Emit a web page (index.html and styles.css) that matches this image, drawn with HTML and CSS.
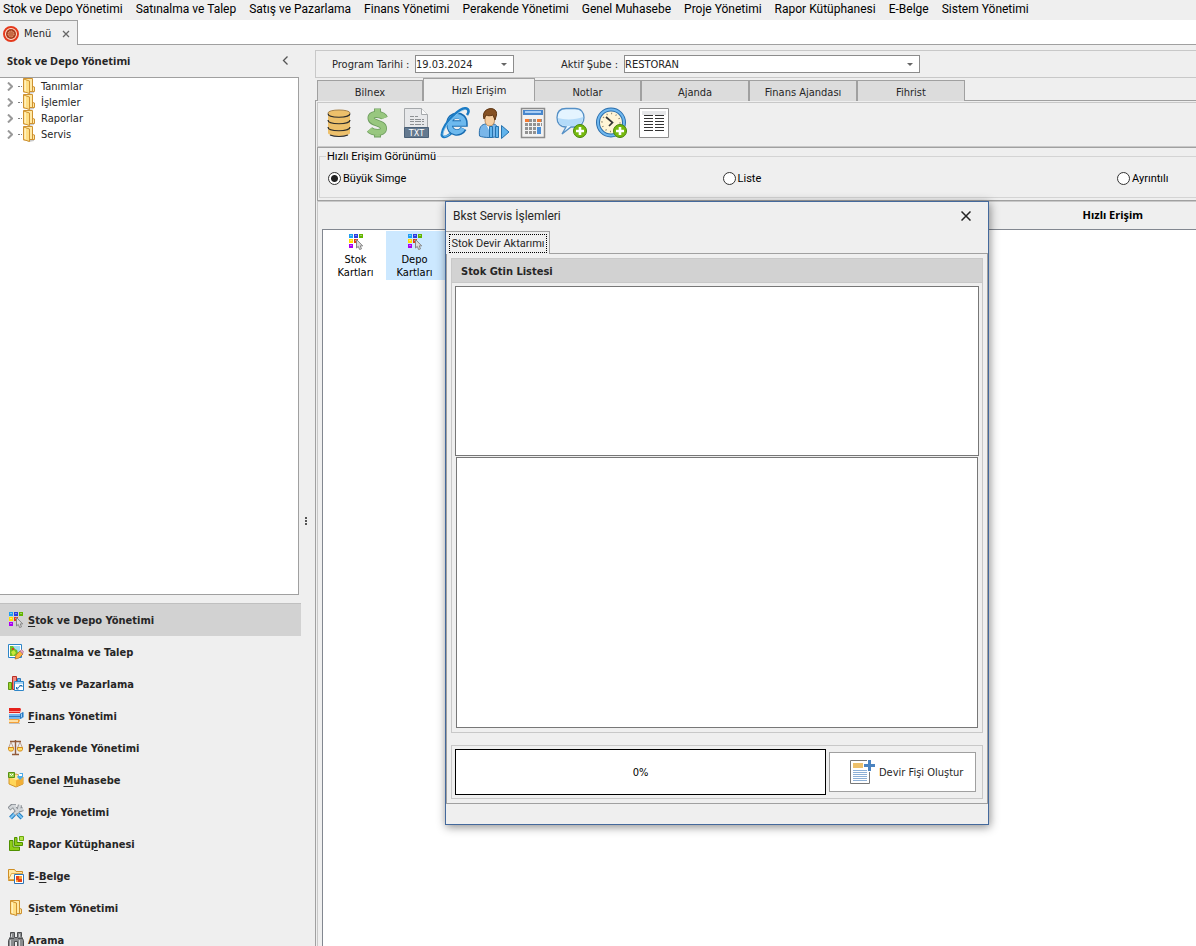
FILE: index.html
```html
<!DOCTYPE html>
<html lang="tr">
<head>
<meta charset="utf-8">
<title>Menü</title>
<link rel="stylesheet" href="styles.css">
</head>
<body>
<svg class="sprite" aria-hidden="true">
  <symbol id="i-blocks" viewBox="0 0 16 16">
    <path fill="#1e9ff2" d="M1 0h4v4H1z"/><path fill="#2b3fe0" d="M6 0h4v4H6z"/><path fill="#62b500" d="M11 0h4v4h-4z"/>
    <path fill="#ffe000" d="M1 5h4v4H1z"/><path fill="#e03a1e" d="M6 5h4v4H6z"/><path fill="#a800f0" d="M1 10h4v4H1z"/>
    <path fill="#fff" opacity=".4" d="M2 1h2v1H2zM7 1h2v1H7zM12 1h2v1h-2zM2 6h2v1H2zM7 6h2v1H7zM2 11h2v1H2z"/>
    <path fill="#dcdcdc" stroke="#858585" d="M8.500 5.500v8.500l1.800-1.600 1.300 3.100 1.900-.7-1.300-2.900h2.500z"/>
  </symbol>
  <symbol id="i-folder" viewBox="0 0 16 16">
    <path fill="#c9c9c9" d="M4 14h9v1l-5 1z"/>
    <path fill="#ffe9a6" stroke="#cf9230" d="M2.500.500h9v8l2 .500v4.500H9l-6.500.500z"/>
    <path fill="#ffdf85" stroke="#cf9230" d="M2.500 1l6 2v12.500l-6-2z"/><path fill="#fff0bd" d="M3.500 2l1.500.600v10.900l-1.500-.500z"/>
    <path fill="none" stroke="#cf9230" d="M11.500 8v5.500"/>
  </symbol>
  <symbol id="i-map" viewBox="0 0 16 16">
    <path fill="#fff" stroke="#2e86c8" d="M.5.500h13v13H.5z"/><path fill="#9edcf5" d="M2 2h10v10H2z"/>
    <path fill="#6fbd28" d="M2 2h3l2 3 2 1 1 3-3 3H2z"/><path fill="#c9e83b" d="M3 8l3-2 2 3-3 3z"/><path fill="#d93b20" d="M4 4h2v2H4z"/>
    <path fill="#ffb440" stroke="#a8641c" stroke-width=".7" d="M7 15l1-4 4-4 3 3-4 4z"/><path fill="#e9a5c0" stroke="#a86a84" stroke-width=".6" d="M12 7l1.500-1.500 2 2L14.500 10z"/>
  </symbol>
  <symbol id="i-bars" viewBox="0 0 16 16">
    <path fill="#9bd22e" stroke="#5f9410" d="M.5 6.500h3v7h-3z"/><path fill="#f08a80" stroke="#bb2f25" d="M4.500.500h4v13h-4z"/>
    <path fill="#68b5ee" stroke="#2c78b8" d="M9.500 2.500h3v4h-3z"/><path fill="#fff" stroke="#2e86c8" d="M6.500 5.500h9v9h-9z"/><path fill="#a9d6f4" d="M7 6h8v2H7z"/>
    <path fill="none" stroke="#1d6fb0" d="M9 12.500l4-3M8.500 11v2h2M11.500 9.500H14V11"/>
  </symbol>
  <symbol id="i-books" viewBox="0 0 16 16">
    <path fill="#e5201b" d="M1 0h11l1 1-1 4H1z"/><path fill="#ff9188" d="M1 3h11v1H1z"/>
    <path fill="#77b6ea" d="M1 6h10l5-2v5l-3 2H1z"/><path fill="#2e78bf" d="M1 8h11v1H1zM12 6l3-2v5l-3 2z"/><path fill="#9fd0f5" d="M13 6l1-.600v3.600l-1 .600z"/>
    <path fill="#f3a13a" d="M1 11h10l1 1-1 3H1z"/><path fill="#ffe0a5" d="M1 12h9v2H1z"/><path fill="#c2c2c2" d="M1 15h11v1H1z"/>
  </symbol>
  <symbol id="i-scale" viewBox="0 0 16 16">
    <path fill="none" stroke="#925b3a" stroke-width="1.400" d="M2 1.500h11M7.500 0v14M4 14.500h7"/><path fill="none" stroke="#b08c74" stroke-width=".8" d="M3 2L.5 8M3 2l2.500 6M12 2L9.500 8M12 2l2.500 6"/>
    <path fill="#ffe069" stroke="#d58c1c" d="M.5 7.500h5v2l-1 1.500h-3l-1-1.500zM9.500 7.500h5v2l-1 1.500h-3l-1-1.500z"/>
  </symbol>
  <symbol id="i-box" viewBox="0 0 16 16">
    <path fill="#ffd659" stroke="#d2952a" d="M1 5l7-3 7 3v7l-7 3-7-3z"/><path fill="#ffeaa0" d="M1.500 5L8 8l6.500-3L8 2.500z"/><path fill="#f2ae35" d="M8 8.500L14.500 6v6L8 14.500z"/>
    <path fill="#9bd052" stroke="#569010" d="M.5.500h6v5h-6z"/><path fill="none" stroke="#fff" d="M2 2l1.500 1.500L5 2"/>
    <path fill="#4bacea" d="M9 5l3-4h3v4l-3 3z"/><path fill="#fff" d="M11 2h3v2h-3z"/>
  </symbol>
  <symbol id="i-tools" viewBox="0 0 16 16">
    <path fill="none" stroke="#247fc0" stroke-width="4" d="M10 10l4 4M6.500 10L2.500 14"/><path fill="none" stroke="#7bc4f3" stroke-width="2" d="M10 10l4 4M6.500 10L2.500 14"/>
    <path fill="none" stroke="#858a90" stroke-width="4.200" d="M1 5l3-3h4M6 3l4.500 5.500M15 5l-3 1-1-1 1-4M11 5.500L6.500 10"/><path fill="none" stroke="#d3d7da" stroke-width="2.400" d="M1.500 4.500l3-2.500H8M6 3l4.500 5.500M15 5l-3 1-1-1 1-4M11 5.500L6.500 10"/>
  </symbol>
  <symbol id="i-green" viewBox="0 0 16 16">
    <path fill="#8fce17" stroke="#4f9000" d="M1.500 4.500H5v6.500h6.500v3.500h-10zM6.500 1.500H9v5h5.500v3h-8z"/><path fill="#b4e34c" stroke="#69a80c" d="M11.500.500h4v4h-4z"/>
  </symbol>
  <symbol id="i-ebelge" viewBox="0 0 16 16">
    <path fill="#ffe8a3" stroke="#cf8e24" d="M.5 1.500h6l1.500 2h6.500v9H.5z"/><path fill="#fff4cc" stroke="#dda84c" d="M3.500 5.500h11v6h-14z"/>
    <path fill="#fff" stroke="#2e74b5" d="M6.500 6.500h9v9h-9z"/><path fill="#e2451b" d="M8 8h6v6H8z"/><path fill="#ffa13c" d="M11 8h3v3h-3zM8 12h2v2H8z"/>
  </symbol>
  <symbol id="i-bino" viewBox="0 0 16 16">
    <path fill="#8a8c8e" stroke="#4d4f51" d="M2.500.500h4v5h3v-5h4v4l2 4v7h-6v-6h-3v6h-6v-7l2-4z"/><path fill="#d2d4d6" d="M3 2h1v3H3zM11 2h1v3h-1zM2 8h1v6H2zM11 8h1v6h-1z"/><path stroke="#4d4f51" d="M1 6.500h5M10 6.500h5"/>
  </symbol>
</svg>

<nav class="menubar">
  <a href="#">Stok ve Depo Yönetimi</a><a href="#">Satınalma ve Talep</a><a href="#">Satış ve Pazarlama</a><a href="#">Finans Yönetimi</a><a href="#">Perakende Yönetimi</a><a href="#">Genel Muhasebe</a><a href="#">Proje Yönetimi</a><a href="#">Rapor Kütüphanesi</a><a href="#">E-Belge</a><a href="#">Sistem Yönetimi</a>
</nav>

<div class="doctabs">
  <div class="doctab">
    <svg width="16" height="16" viewBox="0 0 16 16"><circle cx="8" cy="8" r="7" fill="#ffe3d0" stroke="#e5391c" stroke-width="2"/><circle cx="8" cy="8" r="5" fill="#a83a1c"/><circle cx="8" cy="8" r="3" fill="#c76a45" stroke="#efb08c" stroke-dasharray="1 1"/></svg>
    <span>Menü</span>
    <button class="plain" aria-label="Kapat"><svg width="8" height="8" viewBox="0 0 8 8"><path d="M1 1l6 6M7 1L1 7" stroke="#666" stroke-width="1.300"/></svg></button>
  </div>
</div>

<div class="workspace">
  <aside class="side">
    <header class="side-head"><h2>Stok ve Depo Yönetimi</h2>
      <button class="plain" aria-label="Daralt"><svg width="7" height="9" viewBox="0 0 7 9"><path d="M5.500.500l-4 4 4 4" fill="none" stroke="#555" stroke-width="1.300"/></svg></button>
    </header>
    <ul class="tree">
      <li><svg class="chev" viewBox="0 0 6 9"><path d="M1 .500l4 4-4 4"/></svg><i></i><svg class="ic"><use href="#i-folder"/></svg><span>Tanımlar</span></li>
      <li><svg class="chev" viewBox="0 0 6 9"><path d="M1 .500l4 4-4 4"/></svg><i></i><svg class="ic"><use href="#i-folder"/></svg><span>İşlemler</span></li>
      <li><svg class="chev" viewBox="0 0 6 9"><path d="M1 .500l4 4-4 4"/></svg><i></i><svg class="ic"><use href="#i-folder"/></svg><span>Raporlar</span></li>
      <li><svg class="chev" viewBox="0 0 6 9"><path d="M1 .500l4 4-4 4"/></svg><i></i><svg class="ic"><use href="#i-folder"/></svg><span>Servis</span></li>
    </ul>
    <nav class="groups">
      <a href="#" class="current"><svg class="ic"><use href="#i-blocks"/></svg><span><u>S</u>tok ve Depo Yönetimi</span></a>
      <a href="#"><svg class="ic"><use href="#i-map"/></svg><span>S<u>a</u>tınalma ve Talep</span></a>
      <a href="#"><svg class="ic"><use href="#i-bars"/></svg><span>Sa<u>t</u>ış ve Pazarlama</span></a>
      <a href="#"><svg class="ic"><use href="#i-books"/></svg><span><u>F</u>inans Yönetimi</span></a>
      <a href="#"><svg class="ic"><use href="#i-scale"/></svg><span>P<u>e</u>rakende Yönetimi</span></a>
      <a href="#"><svg class="ic"><use href="#i-box"/></svg><span>Genel <u>M</u>uhasebe</span></a>
      <a href="#"><svg class="ic"><use href="#i-tools"/></svg><span>Pro<u>j</u>e Yönetimi</span></a>
      <a href="#"><svg class="ic"><use href="#i-green"/></svg><span>Rapor Kütü<u>p</u>hanesi</span></a>
      <a href="#"><svg class="ic"><use href="#i-ebelge"/></svg><span>E-<u>B</u>elge</span></a>
      <a href="#"><svg class="ic"><use href="#i-folder"/></svg><span>S<u>i</u>stem Yönetimi</span></a>
      <a href="#"><svg class="ic"><use href="#i-bino"/></svg><span>Arama</span></a>
    </nav>
  </aside>

  <div class="splitter"><svg width="2" height="8" viewBox="0 0 2 8"><path fill="#555" d="M0 0h2v2H0zM0 3h2v2H0zM0 6h2v2H0z"/></svg></div>

  <main class="main">
    <div class="filters">
      <label for="date">Program Tarihi :</label>
      <span class="combo date"><select id="date"><option>19.03.2024</option></select><svg width="6" height="3" viewBox="0 0 6 3"><path fill="#666" d="M0 0h6L3 3z"/></svg></span>
      <label for="branch">Aktif Şube :</label>
      <span class="combo branch"><select id="branch"><option>RESTORAN</option></select><svg width="6" height="3" viewBox="0 0 6 3"><path fill="#666" d="M0 0h6L3 3z"/></svg></span>
    </div>

    <div class="tabs" role="tablist">
      <button role="tab">Bilnex</button><button role="tab" class="active" aria-selected="true">Hızlı Erişim</button><button role="tab">Notlar</button><button role="tab">Ajanda</button><button role="tab">Finans Ajandası</button><button role="tab">Fihrist</button>
    </div>

    <div class="page">
      <div class="toolbar">
        <button class="plain" aria-label="Veritabanı"><svg width="32" height="32" viewBox="0 0 32 32"><path fill="#edc06b" d="M6 6c0-4 22-4 22 0v20c0 4-22 4-22 0z"/><path fill="none" stroke="#2b2b2b" stroke-width="1.200" d="M6 6.500c0 5 22 5 22 0M6 13c0 5 22 5 22 0M6 20c0 5 22 5 22 0M8 28c5 2 13 2 18 0"/><path fill="none" stroke="#a8834a" d="M6 6c0-4 22-4 22 0"/></svg></button>
        <button class="plain" aria-label="Döviz"><svg width="32" height="32" viewBox="0 0 32 32"><path fill="none" stroke="#6d9c5e" stroke-width="7" d="M23.500 11C22 7 10 5.500 10 11c0 6 12.500 4 12.500 10.500 0 5.500-11 4.500-14 1M16.500 1.500v6M16.500 24.500v6"/><path fill="none" stroke="#98c77f" stroke-width="5.400" d="M23.500 11C22 7 10 5.500 10 11c0 6 12.500 4 12.500 10.500 0 5.500-11 4.500-14 1M16.500 2v6M16.500 24.500v5"/></svg></button>
        <button class="plain" aria-label="Metin dosyası"><svg width="32" height="32" viewBox="0 0 32 32"><path fill="#e7e8ea" stroke="#a5a8ab" d="M4.500 1.500h17l6 6v22h-23z"/><path fill="#fafafa" stroke="#a5a8ab" d="M21.500 1.500v6h6"/><path stroke="#8d9093" stroke-dasharray="4 1 6 1" d="M10 9.500h8M10 12.500h14M10 14.500h14M10 17.500h14"/><path fill="#64798f" stroke="#4a6077" d="M4.500 20.500h24v10h-24z"/><text x="16.500" y="29" text-anchor="middle" class="txt">TXT</text></svg></button>
        <button class="plain" aria-label="Tarayıcı"><svg width="32" height="32" viewBox="0 0 32 32"><g fill="none"><path stroke="#176bb0" stroke-width="6.500" d="M24.500 21.500c-3 6-14 6-14-5 0-10 15-11 15 0H12"/><path stroke="#6db9ee" stroke-width="4.500" d="M24 21.500c-3 5.500-13.500 5.500-13.500-5C10.500 7 25 6.500 25 16.500H11"/><path stroke="#1c7cc5" stroke-width="2.600" d="M12 26.500c-6 5-10 4-9 0C5 15 23-2 28.500 2c1.500 1.500 1 4-.5 6"/><path stroke="#8fd0f8" stroke-width=".8" d="M11 27c-4 3-7 3-7 0 1-9 14-22 21-24"/></g></svg></button>
        <button class="plain" aria-label="Kullanıcı"><svg width="32" height="32" viewBox="0 0 32 32"><path fill="#79b6e9" stroke="#2b70ac" d="M1.500 29c-1-9 2-12 7-12h6c5 0 6 4 6 12-4 2-15 2-19 0z"/><path fill="#fff" d="M8 17h7l-3.500 7z"/><path fill="#f6cfa2" stroke="#9a6637" stroke-width=".7" d="M7 7h9.500v6c0 5-3 6-5 6s-4.500-2-4.500-6z"/><path fill="#855123" stroke="#5d3411" d="M6 12C2 0 20-2 18.500 8l-1.500 5-2-5c-3 1-5 1-7 0z"/><path fill="#62b4ec" stroke="#2672ad" d="M11.500 19.500h3v11h-3zM17.500 19.500h3v11h-3zM23.500 18.500l7.500 6.500-7.500 6.500z"/></svg></button>
        <button class="plain" aria-label="Hesap makinesi"><svg width="32" height="32" viewBox="0 0 32 32"><path fill="#f2f2f2" stroke="#8c8c8c" stroke-width="1.500" d="M4.500 1.500h23v29h-23z"/><path fill="#4887cd" d="M6 3h20v5H6z"/><path fill="#a9cdf3" d="M8 4h16v2H8z"/><path stroke="#929292" stroke-width="3" stroke-dasharray="3 1" d="M8 13.500h17M8 17.500h17M8 21.500h11M8 25.500h11"/><path fill="#f47b32" d="M8 12h4v3H8zM20 12h4v3h-4z"/><path fill="#4a90d9" d="M20 20h4v7h-4z"/></svg></button>
        <button class="plain" aria-label="Mesaj ekle"><svg width="32" height="32" viewBox="0 0 32 32"><path fill="#e4f4ff" stroke="#5590c6" stroke-width="1.300" d="M10 1.500h9c6 0 9 4 9 9s-3 9.500-9 9.500h-4l-9 7 4-7c-6 0-9-4-9-9.500s3-9 9-9z"/><path fill="#9fd0f7" opacity=".7" d="M2 11c6 2 18 2 25-1 0 5-3 9-8 9h-9c-5 0-8-3-8-8z"/><circle cx="24" cy="24" r="6.500" fill="#76b90d" stroke="#47850a"/><path stroke="#fff" stroke-width="2.600" d="M24 20v8M20 24h8"/></svg></button>
        <button class="plain" aria-label="Saat ekle"><svg width="32" height="32" viewBox="0 0 32 32"><circle cx="16" cy="15.500" r="13" fill="#fff5d6" stroke="#2b6eac" stroke-width="4"/><circle cx="16" cy="15.500" r="13" fill="none" stroke="#70b8ef" stroke-width="2"/><circle cx="16" cy="15.500" r="9" fill="none" stroke="#8a816a" stroke-width="1.500" stroke-dasharray="1 3.700"/><path fill="none" stroke="#333" stroke-width="1.700" d="M11 10l6.500 5.500L14 19"/><circle cx="25" cy="24" r="6.500" fill="#76b90d" stroke="#47850a"/><path stroke="#fff" stroke-width="2.600" d="M25 20v8M21 24h8"/></svg></button>
        <button class="plain last" aria-label="Liste"><svg width="32" height="32" viewBox="0 0 32 32"><path fill="#fff" stroke="#8e8e8e" d="M1.500 1.500h29v29h-29z"/><path fill="#e6e7e9" d="M4 4h24v4H4z"/><path stroke="#333" d="M6 8.500h9M17 8.500h9M6 11.500h9M17 11.500h9M6 14.500h9M17 14.500h9M6 17.500h9M17 17.500h9M6 20.500h9M17 20.500h9M6 23.500h9M17 23.500h9"/></svg></button>
      </div>

      <div class="viewbox">
        <fieldset>
          <legend>Hızlı Erişim Görünümü</legend>
          <label><input type="radio" name="view" checked>Büyük Simge</label>
          <label><input type="radio" name="view">Liste</label>
          <label><input type="radio" name="view">Ayrıntılı</label>
        </fieldset>
      </div>

      <section class="quick">
        <h2>Hızlı Erişim</h2>
        <div class="tiles">
          <button class="plain tile"><svg class="ic"><use href="#i-blocks"/></svg><span>Stok Kartları</span></button>
          <button class="plain tile selected"><svg class="ic"><use href="#i-blocks"/></svg><span>Depo Kartları</span></button>
        </div>
      </section>
    </div>
  </main>
</div>

<div class="dialog" role="dialog" aria-labelledby="dlg-title">
  <header class="dlg-head"><h1 id="dlg-title">Bkst Servis İşlemleri</h1>
    <button class="plain" aria-label="Kapat"><svg width="10" height="10" viewBox="0 0 10 10"><path d="M.5.500l9 9M9.500.500l-9 9" stroke="#222" stroke-width="1.500"/></svg></button>
  </header>
  <div class="dlg-tabs"><button role="tab" aria-selected="true"><span>Stok Devir Aktarımı</span></button></div>
  <div class="dlg-page">
    <section class="lists">
      <h2>Stok Gtin Listesi</h2>
      <div class="list first"></div>
      <div class="list second"></div>
    </section>
    <section class="actions">
      <div class="progress" role="progressbar" aria-label="İlerleme" aria-valuenow="0">0%</div>
      <button class="create"><svg width="26" height="26" viewBox="0 0 26 26"><path fill="#fff" stroke="#777" d="M1.500 1.500h19v23h-19z"/><path fill="#edc06b" d="M4 4h10v5H4z"/><path stroke="#8db0d6" d="M4 11.500h14M4 13.500h14M4 15.500h14M4 17.500h14M4 19.500h14M4 21.500h14"/><path stroke="#fff" stroke-width="5" d="M20.500 0v13M14 6.500h12"/><path stroke="#4a83c0" stroke-width="3" d="M20.500 1v11M15 6.500h11"/></svg><span>Devir Fişi Oluştur</span></button>
    </section>
  </div>
</div>
</body>
</html>
```
FILE: styles.css
```css
* { box-sizing: border-box; }
body {
  margin: 0;
  height: 100vh;
  display: flex;
  flex-direction: column;
  overflow: hidden;
  position: relative;
  background: #efefef;
  color: #262626;
  font: 11px/13px "DejaVu Sans Condensed", "DejaVu Sans", sans-serif;
}
h1, h2, ul, fieldset { margin: 0; padding: 0; }
button, select, input { font: inherit; color: inherit; }
a { color: inherit; text-decoration: none; }
svg { display: block; flex: none; }
.sprite { position: absolute; width: 0; height: 0; }
.plain { border: 0; padding: 0; background: none; }
.ic { width: 16px; height: 16px; }

.menubar {
  display: flex;
  gap: 13px;
  height: 20px;
  padding: 0 3px;
  font: 12px/18px Roboto, "Open Sans", sans-serif;
  color: #000;
  white-space: nowrap;
}
.doctabs { height: 25px; background: #fff; border-bottom: 1px solid #a0a0a0; }
.doctab {
  display: flex;
  align-items: center;
  width: 78px;
  height: 25px;
  padding: 1px 7px 0 3px;
  background: #efefef;
  border: 1px solid #a0a0a0;
  border-width: 1px 1px 0 0;
}
.doctab span { margin-left: 5px; }
.doctab button { margin-left: auto; }

.workspace { flex: 1; min-height: 0; display: flex; }
.side { width: 301px; flex: none; display: flex; flex-direction: column; min-height: 0; }
.side-head {
  display: flex;
  align-items: center;
  justify-content: space-between;
  height: 32px;
  padding: 0 12px 1px 7px;
}
.side-head h2 { font: bold 11px/13px "Noto Sans", sans-serif; }
.tree {
  flex: 1;
  margin-right: 2px;
  background: #fff;
  border: 1px solid #a0a0a0;
  border-left: 0;
  list-style: none;
}
.tree li { display: flex; align-items: center; height: 16px; padding-left: 7px; }
.chev { width: 6px; height: 9px; fill: none; stroke: #999; stroke-width: 2; }
.tree i { width: 4px; margin: 0 3px 0 5px; border-top: 1px dotted #808080; }
.tree .ic { margin-left: -4px; }
.tree span { margin-left: 4px; }
.groups { height: 343px; margin-top: 8px; overflow: hidden; flex: none; }
.groups a {
  display: flex;
  align-items: center;
  gap: 4px;
  height: 32px;
  padding-left: 8px;
  font: bold 11px/13px "DejaVu Sans Condensed", sans-serif;
}
.groups .current { height: 33px; background: #d2d2d2; border-top: 1px solid #c0c0c0; }
.groups u { text-underline-offset: 2px; }
.splitter { width: 14px; display: flex; align-items: center; padding: 51px 0 0 4px; flex: none; }

.main { flex: 1; min-width: 0; display: flex; flex-direction: column; padding-top: 5px; }
.filters {
  display: flex;
  align-items: center;
  height: 28px;
  padding-left: 16px;
  border: 1px solid #c8c8c8;
  border-right: 0;
}
.filters label { width: 83px; }
.filters .combo + label { width: 63px; margin-left: 47px; }
.combo { display: grid; align-items: center; }
.combo > * { grid-area: 1 / 1; }
.combo svg { justify-self: end; margin-right: 7px; pointer-events: none; }
.combo select {
  appearance: none;
  width: 100%;
  height: 18px;
  padding: 0;
  border: 1px solid #8c8c8c;
  border-radius: 0;
  background: #fff;
}
.date { width: 99px; }
.branch { width: 296px; }

.tabs { display: flex; align-items: flex-end; height: 23px; padding-left: 2px; z-index: 1; }
.tabs button {
  width: 108px;
  height: 21px;
  padding: 2px 0 0;
  border: 1px solid #a0a0a0;
  border-bottom: 0;
  background: #dcdcdc;
}
.tabs button:first-child { width: 106px; }
.tabs .active { width: 112px; height: 23px; padding: 1px 0 0; background: #efefef; }
.tabs .active + button { width: 106px; border-left: 0; }
.page {
  flex: 1;
  min-height: 0;
  display: flex;
  flex-direction: column;
  margin-top: -1px;
  padding: 1px 0 0 1px;
  border: solid #a0a0a0;
  border-width: 1px 0 0 1px;
}
.toolbar {
  display: flex;
  align-items: flex-start;
  gap: 7px;
  height: 45px;
  padding: 4px;
  border: solid #c8c8c8;
  border-width: 1px 0 1px 1px;
}
.toolbar .last { margin-left: 4px; }
.txt { font: 9px "DejaVu Sans Condensed", sans-serif; fill: #fff; }
.viewbox {
  height: 54px;
  padding: 1px 0 2px 1px;
  border: solid #a0a0a0;
  border-width: 1px 0 1px 1px;
  color: #000;
  font-family: Roboto, "Open Sans", sans-serif;
}
.viewbox fieldset {
  display: grid;
  grid-template-columns: 5fr 5fr 1fr;
  min-width: 0;
  height: 49px;
  padding: 7px 0 0 8px;
  border: 1px solid #d4d4d4;
  border-right: 0;
}
.viewbox legend { padding: 1px 1px 0; margin-left: -2px; }
.viewbox label { display: flex; align-items: center; gap: 2px; min-width: 0; height: 16px; white-space: nowrap; }
.viewbox input {
  appearance: none;
  flex: none;
  width: 13px;
  height: 13px;
  margin: 0;
  border: 1px solid #333;
  border-radius: 50%;
  background: #fff;
}
.viewbox input:checked { background: radial-gradient(circle, #222 0 3px, #fff 4px); }
.quick {
  flex: 1;
  display: flex;
  flex-direction: column;
  padding-left: 4px;
  border: solid #c8c8c8;
  border-width: 1px 0 0 1px;
}
.quick h2 {
  height: 27px;
  padding-right: 53px;
  text-align: right;
  color: #000;
  font: bold 11px/26px "Noto Sans", sans-serif;
}
.tiles { flex: 1; display: flex; align-items: flex-start; padding: 1px 4px; background: #fff; border: solid #828790; border-width: 1px 0 0 1px; }
.tile { width: 59px; height: 49px; padding: 2px 6px 1px 4px; color: #000; }
.tile svg { margin: 0 auto 3px; }
.tile.selected { background: #cce8ff; }

.dialog {
  position: absolute;
  left: 445px;
  top: 201px;
  width: 544px;
  border: 1px solid #44699c;
  background: #efefef;
  box-shadow: 1px 2px 9px rgba(0, 0, 0, .45);
  padding-bottom: 20px;
}
.dlg-head { display: flex; align-items: center; justify-content: space-between; height: 29px; padding: 0 17px 2px 7px; }
.dlg-head h1 { font: 12px/18px Roboto, "Open Sans", sans-serif; }
.dlg-tabs { display: flex; height: 22px; }
.dlg-tabs button {
  width: 104px;
  height: 23px;
  padding: 2px 2px 1px 3px;
  border: 1px solid #a0a0a0;
  border-width: 1px 1px 0 0;
  background: #efefef;
  z-index: 1;
}
.dlg-tabs span { display: block; border: 1px dotted #000; font-family: Roboto, "Open Sans", sans-serif; line-height: 17px; white-space: nowrap; }
.dlg-page { padding: 4px; border: 1px solid #a0a0a0; }
.lists { border: 1px solid #c8c8c8; padding-bottom: 4px; }
.lists h2 {
  height: 24px;
  padding-left: 9px;
  background: #d2d2d2;
  border-bottom: 1px solid #c8c8c8;
  font: bold 11px/25px "DejaVu Sans Condensed", sans-serif;
}
.list { background: #fff; border: 1px solid #777; }
.first { height: 170px; margin: 3px 3px 1px; }
.second { height: 271px; margin: 0 4px; }
.actions {
  display: flex;
  align-items: center;
  gap: 3px;
  height: 54px;
  margin-top: 12px;
  padding: 0 6px 0 3px;
  border: 1px solid #c8c8c8;
}
.progress { flex: 1; height: 46px; border: 1px solid #000; background: #fff; color: #000; text-align: center; line-height: 45px; }
.create {
  display: flex;
  align-items: center;
  gap: 4px;
  width: 147px;
  height: 40px;
  padding: 0 0 0 19px;
  border: 1px solid #a0a0a0;
  background: #fff;
}
```
